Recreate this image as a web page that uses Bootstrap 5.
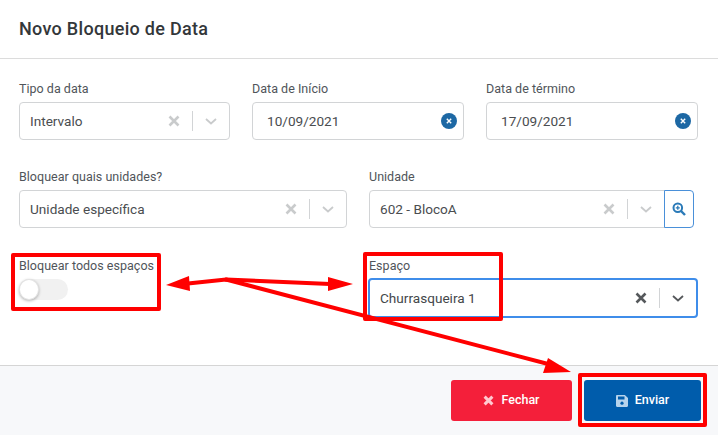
<!DOCTYPE html>
<html lang="pt-BR">
<head>
<meta charset="utf-8">
<title>Novo Bloqueio de Data</title>
<link href="https://cdn.jsdelivr.net/npm/bootstrap@5.3.0/dist/css/bootstrap.min.css" rel="stylesheet">
<style>
html,body{height:435px;overflow:hidden}
body{background:#fff;font-family:Roboto,"Liberation Sans",sans-serif;color:#3f4245;position:relative}
.dlg-head{height:59px;padding:0 19px;border-bottom:1px solid #dcdcdc}
.dlg-title{font-size:18px;font-weight:500;letter-spacing:.3px;color:#33373a;margin:0}
.dlg-body{height:306px;padding:22px 20px 0 19px}
.grid-three{display:grid;grid-template-columns:211px 212px 212px;column-gap:22px;height:88px}
.grid-two{display:grid;grid-template-columns:328px 329px;column-gap:22px}
.fld-label{font-size:12.5px;line-height:16px;color:#50555a;margin:0 0 5px;letter-spacing:.02px;display:block}
.fld-box{height:38px;border:1px solid #d2d4d6;border-radius:4px;background:#fff;font-size:13.6px;color:#4a4d50;padding:0 0 0 10px}
.fld-date{padding-left:14px}
.fld-focus{height:40px;border:2px solid #3f8dea;color:#44474a;padding-left:10px;border-radius:4px;margin:-1px 0 0 -1px}
.ctl-x,.ctl-ch{width:12px;height:12px;flex:none}
.ctl-x{margin-right:12px}
.ctl-sep{width:1px;height:20px;background:#d2d4d6;flex:none}
.ctl-ch{margin:0 12px}
.clr-dot{width:16px;height:16px;border-radius:50%;background:#1d68a4;margin-right:6px;flex:none}
.search-btn{width:30px;height:38px;border:1px solid #4a90d9;border-radius:0 4px 4px 0;margin-left:-1px;background:#fff;padding:0;flex:none}
.unit-field{flex:1 1 auto;border-radius:4px 0 0 4px}
.row-second{height:89px;grid-template-columns:328px 325px}
.tgl{width:49px;height:21px;border-radius:11px;background:#f1f1f1;position:relative}
.tgl-knob{position:absolute;left:0;top:0;width:20px;height:21px;border-radius:50%;background:#fff;border:1px solid #e4e4e4;box-shadow:0 1px 3px rgba(0,0,0,.3)}
.dlg-foot{height:70px;background:#f7f8fa;border-top:1px solid #d5d5d5;padding:14px 17px 0 0;gap:12px}
.act{width:121px;height:41px;border-radius:3px;border:0;color:#fff;font-size:12.5px;font-weight:500;padding:0;gap:7px}
.act-red{background:#f41f3a;color:#fff}
.act-blue{background:#005cab;color:#fff;width:117px}
.act:hover{color:#fff}
.marks{position:absolute;left:0;top:0;width:718px;height:435px;pointer-events:none}
</style>
</head>
<body>
<div class="dlg-head d-flex align-items-center"><h5 class="dlg-title">Novo Bloqueio de Data</h5></div>
<div class="dlg-body">
  <div class="grid-three">
    <div>
      <label class="fld-label">Tipo da data</label>
      <div class="fld-box d-flex align-items-center">
        <span class="flex-grow-1">Intervalo</span>
        <svg class="ctl-x" viewBox="0 0 12 12"><path d="M1.500 1.500l9 9M10.500 1.500l-9 9" stroke="#c9cbcc" stroke-width="2.600" fill="none"/></svg>
        <span class="ctl-sep"></span>
        <svg class="ctl-ch" viewBox="0 0 12 12"><path d="M1 4l5 4.500L11 4" stroke="#c9cbcc" stroke-width="1.800" fill="none"/></svg>
      </div>
    </div>
    <div>
      <label class="fld-label">Data de Início</label>
      <div class="fld-box fld-date d-flex align-items-center">
        <span class="flex-grow-1">10/09/2021</span>
        <span class="clr-dot d-flex align-items-center justify-content-center"><svg width="6" height="6" viewBox="0 0 6 6"><path d="M.8.8l4.400 4.400M5.200.8L.8 5.200" stroke="#fff" stroke-width="1.400"/></svg></span>
      </div>
    </div>
    <div>
      <label class="fld-label">Data de término</label>
      <div class="fld-box fld-date d-flex align-items-center">
        <span class="flex-grow-1">17/09/2021</span>
        <span class="clr-dot d-flex align-items-center justify-content-center"><svg width="6" height="6" viewBox="0 0 6 6"><path d="M.8.8l4.400 4.400M5.200.8L.8 5.200" stroke="#fff" stroke-width="1.400"/></svg></span>
      </div>
    </div>
  </div>
  <div class="grid-two row-second">
    <div>
      <label class="fld-label">Bloquear quais unidades?</label>
      <div class="fld-box d-flex align-items-center">
        <span class="flex-grow-1">Unidade específica</span>
        <svg class="ctl-x" viewBox="0 0 12 12"><path d="M1.500 1.500l9 9M10.500 1.500l-9 9" stroke="#c9cbcc" stroke-width="2.600" fill="none"/></svg>
        <span class="ctl-sep"></span>
        <svg class="ctl-ch" viewBox="0 0 12 12"><path d="M1 4l5 4.500L11 4" stroke="#c9cbcc" stroke-width="1.800" fill="none"/></svg>
      </div>
    </div>
    <div>
      <label class="fld-label">Unidade</label>
      <div class="d-flex">
        <div class="fld-box unit-field d-flex align-items-center">
          <span class="flex-grow-1">602 - BlocoA</span>
          <svg class="ctl-x" viewBox="0 0 12 12"><path d="M1.500 1.500l9 9M10.500 1.500l-9 9" stroke="#c9cbcc" stroke-width="2.600" fill="none"/></svg>
          <span class="ctl-sep"></span>
          <svg class="ctl-ch" viewBox="0 0 12 12"><path d="M1 4l5 4.500L11 4" stroke="#c9cbcc" stroke-width="1.800" fill="none"/></svg>
        </div>
        <button class="search-btn d-flex align-items-center justify-content-center" type="button" aria-label="Buscar">
          <svg width="14" height="14" viewBox="0 0 14 14"><circle cx="5.800" cy="5.800" r="4.300" fill="none" stroke="#2a7ab8" stroke-width="2"/><path d="M9 9l4 4" stroke="#2a7ab8" stroke-width="2.400"/><path d="M3.800 5.800h4M5.800 3.800v4" stroke="#2a7ab8" stroke-width="1.300"/></svg>
        </button>
      </div>
    </div>
  </div>
  <div class="grid-two">
    <div>
      <label class="fld-label">Bloquear todos espaços</label>
      <div class="tgl"><span class="tgl-knob"></span></div>
    </div>
    <div>
      <label class="fld-label">Espaço</label>
      <div class="fld-box fld-focus d-flex align-items-center">
        <span class="flex-grow-1">Churrasqueira 1</span>
        <svg class="ctl-x" viewBox="0 0 12 12"><path d="M1.500 1.500l9 9M10.500 1.500l-9 9" stroke="#55585b" stroke-width="2.600" fill="none"/></svg>
        <span class="ctl-sep"></span>
        <svg class="ctl-ch" viewBox="0 0 12 12"><path d="M1 4l5 4.500L11 4" stroke="#55585b" stroke-width="1.800" fill="none"/></svg>
      </div>
    </div>
  </div>
</div>
<div class="dlg-foot d-flex justify-content-end align-items-start">
  <button class="btn act act-red d-flex align-items-center justify-content-center" type="button">
    <svg width="11" height="11" viewBox="0 0 11 11"><path d="M1.600 1.600l7.800 7.800M9.400 1.600l-7.800 7.800" stroke="#ffc9d0" stroke-width="3" fill="none"/></svg>Fechar
  </button>
  <button class="btn act act-blue d-flex align-items-center justify-content-center" type="button">
    <svg width="12" height="12" viewBox="0 0 12 12"><path d="M0 1.200C0 .5.5 0 1.200 0h7.600L12 3v7.800c0 .7-.5 1.200-1.200 1.200H1.200C.5 12 0 11.500 0 10.800z" fill="#b6d3ec"/><rect x="2" y="1.500" width="6.500" height="3" fill="#005cab"/><circle cx="6" cy="8.200" r="1.600" fill="#005cab"/></svg>Enviar
  </button>
</div>
<svg class="marks" viewBox="0 0 718 435" aria-hidden="true">
  <g fill="none" stroke="#f00" stroke-width="4" stroke-linejoin="round">
    <rect x="13" y="255" width="146" height="54"/>
    <rect x="365" y="254" width="136" height="65"/>
    <rect x="580" y="375" width="125" height="50"/>
  </g>
  <g fill="none" stroke="#f00" stroke-width="4" stroke-linecap="round">
    <path d="M188 283.500L226 279.500 330 284"/>
    <path d="M226 279.500L552 365"/>
  </g>
  <g fill="#f00">
    <path d="M166 285L189 276 190 291z"/>
    <path d="M353 284L328 277 328 291z"/>
    <path d="M571 372L548 358 543 373z"/>
  </g>
</svg>
<script src="https://cdn.jsdelivr.net/npm/bootstrap@5.3.0/dist/js/bootstrap.bundle.min.js"></script>
</body>
</html>
